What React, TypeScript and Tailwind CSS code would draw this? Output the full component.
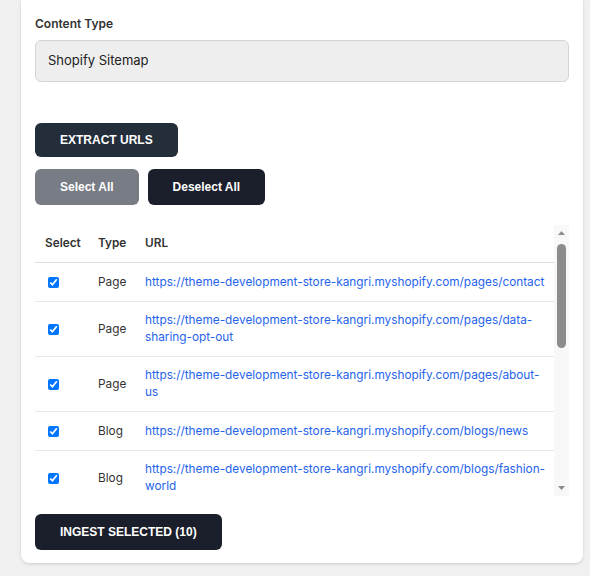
import React from "react";

type Row = { type: string; url: string };

const BASE = "https://theme-development-store-kangri.myshopify.com";

const rows: Row[] = [
  { type: "Page", url: `${BASE}/pages/contact` },
  { type: "Page", url: `${BASE}/pages/data-sharing-opt-out` },
  { type: "Page", url: `${BASE}/pages/about-us` },
  { type: "Blog", url: `${BASE}/blogs/news` },
  { type: "Blog", url: `${BASE}/blogs/fashion-world` },
  { type: "Blog", url: `${BASE}/blogs/news/welcome-to-our-new-store-and-seasonal-collection-highlights-for-everyone` },
  { type: "Page", url: `${BASE}/pages/shipping-and-returns` },
  { type: "Blog", url: `${BASE}/blogs/fashion-world/top-ten-winter-fashion-trends-you-need-to-know-about-this-season` },
  { type: "Page", url: `${BASE}/pages/frequently-asked-questions` },
  { type: "Blog", url: `${BASE}/blogs/fashion-world/how-to-style-your-favourite-pieces-for-every-occasion-of-the-year` },
];

function Scrollbar() {
  // drawn track, since the headless page only shows overlay scrollbars
  return (
    <div className="w-[15px] shrink-0 bg-[#f8f8f8] flex flex-col items-center">
      <svg width="15" height="15" viewBox="0 0 15 15">
        <polygon points="4,10 11,10 7.5,6" fill="#8c8c8c" />
      </svg>
      <div className="mt-1 w-[9px] h-[104px] rounded-full bg-[#8c8c8c]" />
      <div className="flex-1" />
      <svg width="15" height="15" viewBox="0 0 15 15">
        <polygon points="4,5 11,5 7.5,9" fill="#8c8c8c" />
      </svg>
    </div>
  );
}

export default function App() {
  const btn =
    "font-['Liberation_Sans',Arial,sans-serif] text-xs font-bold text-white rounded-md px-[25px]";

  return (
    <div className="min-h-[576px] bg-[#f0f0f0] pl-[21px] pr-[7px] pb-[13px] font-['Inter',sans-serif]">
      <div className="bg-white rounded-b-lg shadow-[0_1px_3px_rgba(0,0,0,0.15)] px-[14px] pt-4 pb-[13px]">
        <label className="block text-xs leading-4 font-semibold text-[#333] mb-2">
          Content Type
        </label>
        <div className="h-[42px] flex items-center px-3 rounded-md border border-[#d4d4d8] bg-[#eeeeee] text-[13px] text-[#222]">
          Shopify Sitemap
        </div>

        <button className={`${btn} mt-[41px] h-[34px] bg-[#242d3a] block`}>
          EXTRACT URLS
        </button>

        <div className="flex gap-[9px] mt-3">
          <button className={`${btn} h-9 bg-[#787c85]`}>Select All</button>
          <button className={`${btn} h-9 bg-[#1b1f2b]`}>Deselect All</button>
        </div>

        <div className="mt-5 h-[271px] flex">
          <div className="flex-1 overflow-hidden">
            <table className="w-full table-fixed border-collapse text-[11.8px] leading-[17px] text-[#333]">
              <colgroup>
                <col className="w-[53px]" />
                <col className="w-[47px]" />
                <col />
              </colgroup>
              <thead>
                <tr className="border-b border-[#dddddd]">
                  <th className="px-[10px] py-[10px] text-left font-semibold">Select</th>
                  <th className="px-[10px] py-[10px] text-left font-semibold">Type</th>
                  <th className="px-[10px] py-[10px] text-left font-semibold">URL</th>
                </tr>
              </thead>
              <tbody>
                {rows.map((r, i) => (
                  <tr key={i} className="h-[39px] border-b border-[#e8e8e8]">
                    <td className="px-[10px] py-[10px] align-middle">
                      <input
                        type="checkbox"
                        defaultChecked
                        className="ml-[3px] size-[11px] align-middle"
                      />
                    </td>
                    <td className="px-[10px] py-[10px] align-middle">{r.type}</td>
                    <td className="pl-[10px] pr-[6px] py-[10px] align-middle">
                      <a href="#" className="text-[#2563eb]">
                        {r.url}
                      </a>
                    </td>
                  </tr>
                ))}
              </tbody>
            </table>
          </div>
          <Scrollbar />
        </div>

        <button className={`${btn} mt-[18px] h-9 bg-[#1b1f2b]`}>
          INGEST SELECTED (10)
        </button>
      </div>
    </div>
  );
}
